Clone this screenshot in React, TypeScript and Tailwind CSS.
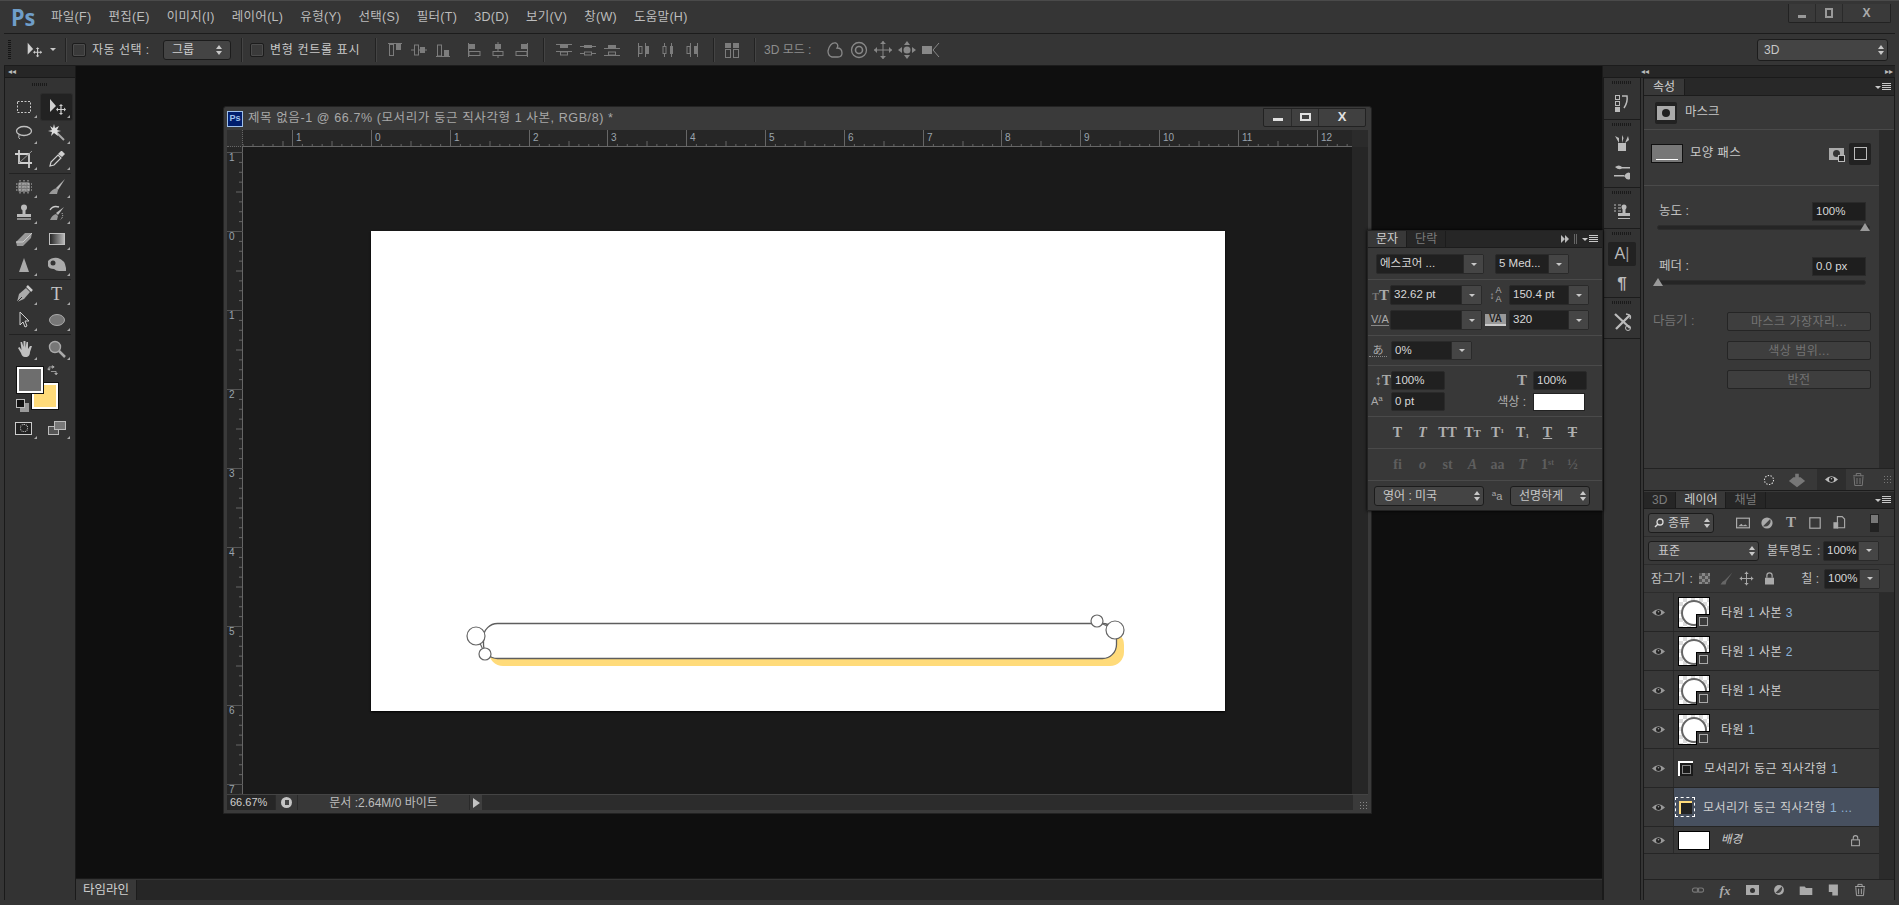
import type { ReactNode } from "react";

const rulerX = [
  [292, "1"], [371, "0"], [450, "1"], [529, "2"], [607, "3"], [686, "4"], [765, "5"],
  [844, "6"], [923, "7"], [1001, "8"], [1080, "9"], [1159, "10"], [1238, "11"], [1317, "12"],
] as const;
const rulerY = [
  [152, "1"], [231, "0"], [310, "1"], [389, "2"], [468, "3"], [547, "4"], [626, "5"], [705, "6"], [784, "7"],
] as const;

const menus = ["파일(F)", "편집(E)", "이미지(I)", "레이어(L)", "유형(Y)", "선택(S)", "필터(T)", "3D(D)", "보기(V)", "창(W)", "도움말(H)"];

function Ico({ size = 20, children, className = "" }: { size?: number; children: ReactNode; className?: string }) {
  return (
    <svg width={size} height={size} viewBox="0 0 20 20" className={"shrink-0 " + className}>
      {children}
    </svg>
  );
}

function Grip({ n = 11 }: { n?: number }) {
  return <div className="h-[3px] bg-[repeating-linear-gradient(90deg,#1a1a1a_0_1px,transparent_1px_2px)]" style={{ width: n * 2 }} />;
}

function Caret({ className = "border-t-[#c8c8c8]" }: { className?: string }) {
  return <div className={"w-0 h-0 border-x-[3px] border-x-transparent border-t-[3px] " + className} />;
}

function UpDown() {
  return (
    <div className="flex flex-col gap-[2px] items-center">
      <div className="w-0 h-0 border-x-[3px] border-x-transparent border-b-[4px] border-b-[#c8c8c8]" />
      <div className="w-0 h-0 border-x-[3px] border-x-transparent border-t-[4px] border-t-[#c8c8c8]" />
    </div>
  );
}

function MoveIcon({ size = 20 }: { size?: number }) {
  return (
    <Ico size={size}>
      <path d="M3 2v13l6-6z" fill="#d0d0d0" />
      <path d="M14 8v9M10 12.500h8" stroke="#d0d0d0" strokeWidth="1.200" />
      <path d="M14 7l-2 2h4zM14 18l-2-2h4zM9 12.500l2-2v4zM19 12.500l-2-2v4z" fill="#d0d0d0" />
    </Ico>
  );
}

function Tool({ children, active }: { children: ReactNode; active?: boolean }) {
  return (
    <div className={"w-[31px] h-[26px] flex items-center justify-center relative " + (active ? "bg-[#222] rounded-[2px] shadow-[0_0_0_1px_#2c2c2c]" : "")}>
      {children}
      <div className="absolute right-[2px] bottom-[2px] w-0 h-0 border-l-[3px] border-l-transparent border-b-[3px] border-b-[#a8a8a8]" />
    </div>
  );
}

function ToolRow({ children }: { children: ReactNode }) {
  return <div className="flex gap-[2px] justify-center">{children}</div>;
}

function ToolSep({ className = "" }: { className?: string }) {
  return <div className={"h-px bg-[#222] mx-[4px] " + className} />;
}

function ToolPanel() {
  return (
    <div className="w-[72px] h-full bg-[#333] border-x border-[#1a1a1a] flex flex-col">
      <div className="h-[12px] bg-[#262626] border-b border-[#1a1a1a] flex items-center pl-[3px] text-[#bbb] text-[8px] leading-none">◂◂</div>
      <div className="flex justify-center pt-[5px] pb-[8px]"><Grip n={8} /></div>
      <div className="flex flex-col">
        <ToolRow>
          <Tool><Ico><rect x="3.500" y="4.500" width="13" height="11" fill="none" stroke="#c8c8c8" strokeDasharray="2 1.500" /></Ico></Tool>
          <Tool active><MoveIcon /></Tool>
        </ToolRow>
        <ToolRow>
          <Tool><Ico><ellipse cx="10" cy="8" rx="7.500" ry="4.500" fill="none" stroke="#c0c0c0" strokeWidth="1.300" /><path d="M5 12q-1 3 1 4" fill="none" stroke="#c0c0c0" /></Ico></Tool>
          <Tool><Ico><path d="M8 8l9 9" stroke="#aaa" strokeWidth="2" /><path d="M7 1l1 4 4-2-2 4 4 1-4 1 1 4-4-3-3 3 1-4-4-1 4-1-2-4 3 2z" fill="#ddd" /></Ico></Tool>
        </ToolRow>
        <ToolRow>
          <Tool><Ico><path d="M5 1v13h13M1 5h14v14" fill="none" stroke="#d0d0d0" strokeWidth="1.800" /><path d="M5 14L18 2" stroke="#999" /></Ico></Tool>
          <Tool><Ico><path d="M3 17l1-4 7-7 3 3-7 7z" fill="none" stroke="#d0d0d0" strokeWidth="1.200" /><path d="M11 5l3-3 1 0 3 3-3 3z" fill="#d0d0d0" /></Ico></Tool>
        </ToolRow>
        <ToolSep className="mt-[1px]" />
        <ToolRow>
          <Tool><Ico><rect x="4" y="5" width="12" height="10" rx="2" fill="#777" /><path d="M2 7h16M2 10h16M2 13h16M6 3v14M10 3v14M14 3v14" stroke="#bbb" strokeDasharray="1.500 1.500" /></Ico></Tool>
          <Tool><Ico><path d="M18 2L9 11l2 2z" fill="#b8b8b8" /><path d="M10 11q-5 1-8 6h8l1-4z" fill="#999" /></Ico></Tool>
        </ToolRow>
        <ToolRow>
          <Tool><Ico><circle cx="10" cy="4.500" r="3" fill="#bbb" /><path d="M8.500 7h3v4h-3z" fill="#bbb" /><rect x="3" y="11" width="14" height="3" fill="#bbb" /><path d="M3 16h14" stroke="#bbb" strokeWidth="1.300" /></Ico></Tool>
          <Tool><Ico><path d="M17 4L9 10l2 2z" fill="#bbb" /><path d="M9 11q-4 1-6 6h7l1-4z" fill="#999" /><path d="M3 7q3-5 9-3" fill="none" stroke="#ccc" strokeWidth="1.400" /><path d="M15 10q2 4-2 7" fill="none" stroke="#ccc" strokeDasharray="1 1" /></Ico></Tool>
        </ToolRow>
        <ToolRow>
          <Tool><Ico><path d="M2 13L11 4h7l-1 5-8 8H3z" fill="#999" /><path d="M2 13h7l9-9" fill="none" stroke="#ccc" /></Ico></Tool>
          <Tool><Ico><defs><linearGradient id="grad"><stop offset="0" stopColor="#222" /><stop offset="1" stopColor="#bbb" /></linearGradient></defs><rect x="2.500" y="4.500" width="15" height="11" fill="url(#grad)" stroke="#c0c0c0" /></Ico></Tool>
        </ToolRow>
        <ToolRow>
          <Tool><Ico><path d="M10 3l5 14H5z" fill="#aaa" /></Ico></Tool>
          <Tool><Ico><path d="M1 6q4-4 10-3 7 2 8 10v3h-7q-3 0-5-2-5 0-6-3z" fill="#aaa" /><circle cx="6" cy="8" r="2.500" fill="#333" /></Ico></Tool>
        </ToolRow>
        <ToolSep className="my-[1px]" />
        <ToolRow>
          <Tool><Ico><path d="M3 18l2-8 7-6 4 4-6 7z" fill="#aaa" /><path d="M13 2l5 5" stroke="#ccc" strokeWidth="2.500" /><path d="M3 18l5-5" stroke="#333" /></Ico></Tool>
          <Tool><div className="text-[#c4c4c4] text-[18px] leading-none font-['Liberation_Serif',serif]">T</div></Tool>
        </ToolRow>
        <ToolRow>
          <Tool><Ico><path d="M6 2v13l3-3 2 5 2-1-2-5h4z" fill="#333" stroke="#d0d0d0" /></Ico></Tool>
          <Tool><Ico><ellipse cx="10" cy="10" rx="7.500" ry="5.500" fill="#777" stroke="#aaa" /></Ico></Tool>
        </ToolRow>
        <ToolSep className="mt-[1px] mb-[1px]" />
        <ToolRow>
          <Tool><Ico><path d="M4 9l3 5q1 4 4 4h2q3-1 3-5l2-6-2 0-2 3 0-7h-1.500l-1 6V2h-2l0 6L8 3H6.500l1 8-2-3z" fill="#c0c0c0" /></Ico></Tool>
          <Tool><Ico><circle cx="8" cy="8" r="5.500" fill="#777" stroke="#aaa" strokeWidth="1.400" /><path d="M12 12l6 6" stroke="#aaa" strokeWidth="2.500" /></Ico></Tool>
        </ToolRow>
      </div>
      <div className="relative h-[50px] mt-[3px] shrink-0">
        <div className="absolute left-[12px] top-[2px] w-[26px] h-[26px] bg-[#6e6e6e] border-2 border-white shadow-[0_0_0_1px_#111] z-10" />
        <div className="absolute left-[27px] top-[18px] w-[26px] h-[26px] bg-[#ffdb7a] border-2 border-white shadow-[0_0_0_1px_#111]" />
        <div className="absolute left-[42px] top-0">
          <Ico size={13}><path d="M3 8V3h8M11 3l-3-2v4zM3 8L1 6h4zM6 10h8v5M14 15l-2-2h4z" fill="none" stroke="#ccc" /></Ico>
        </div>
        <div className="absolute left-[11px] top-[34px] w-[9px] h-[9px] bg-[#111] border border-[#bbb] z-10" />
        <div className="absolute left-[15px] top-[38px] w-[9px] h-[9px] bg-[#999]" />
      </div>
      <ToolRow>
        <Tool><div className="w-[17px] h-[13px] bg-[#222] border border-[#ccc] flex items-center justify-center"><div className="w-[8px] h-[8px] rounded-full border border-dotted border-[#ddd]" /></div></Tool>
        <Tool><div className="relative w-[18px] h-[14px]"><div className="absolute left-0 bottom-0 w-[11px] h-[9px] bg-[#555] border border-[#bbb]" /><div className="absolute right-0 top-0 w-[12px] h-[9px] bg-[#777] border border-[#bbb]" /></div></Tool>
      </ToolRow>
    </div>
  );
}

function OptSep({ className = "" }: { className?: string }) {
  return <div className={"w-[2px] h-[24px] bg-[#222] border-r border-[#444] shrink-0 " + className} />;
}

function Check() {
  return <div className="w-[14px] h-[14px] rounded-[2px] bg-[#3a3a3a] border border-[#1c1c1c] shadow-[inset_0_0_0_1px_#4c4c4c] shrink-0" />;
}

const alignColor = "#7c7c7c";

function AlignIcon({ v }: { v: "top" | "mid" | "bot" | "left" | "center" | "right" }) {
  const c = alignColor;
  const shapes: Record<string, ReactNode> = {
    top: <><path d="M3 3.500h14" stroke={c} /><rect x="4.500" y="4.500" width="4" height="11" fill="none" stroke={c} /><rect x="11" y="4" width="5" height="6" fill={c} /></>,
    mid: <><path d="M2 10h16" stroke={c} /><rect x="5.500" y="5" width="4" height="10" fill="#353535" stroke={c} /><rect x="11" y="7" width="5" height="6" fill={c} /></>,
    bot: <><path d="M3 16.500h14" stroke={c} /><rect x="4.500" y="5" width="4" height="11" fill="none" stroke={c} /><rect x="11" y="10" width="5" height="6" fill={c} /></>,
    left: <><path d="M4.500 3v14" stroke={c} /><rect x="5" y="4" width="6" height="5" fill={c} /><rect x="5" y="11.500" width="11" height="4" fill="none" stroke={c} /></>,
    center: <><path d="M10 2v16" stroke={c} /><rect x="7" y="4" width="6" height="5" fill={c} /><rect x="5" y="11.500" width="10" height="4" fill="#353535" stroke={c} /></>,
    right: <><path d="M15.500 3v14" stroke={c} /><rect x="9" y="4" width="6" height="5" fill={c} /><rect x="4" y="11.500" width="11" height="4" fill="none" stroke={c} /></>,
  };
  return <Ico size={20}>{shapes[v]}</Ico>;
}

function DistIcon({ kind }: { kind: "t" | "m" | "b" | "l" | "c" | "r" }) {
  const c = alignColor;
  const shapes: Record<string, ReactNode> = {
    t: <><path d="M2 4.500h16M2 11.500h16" stroke={c} /><rect x="6" y="5" width="8" height="3" fill={c} /><rect x="6.500" y="12" width="7" height="3" fill="none" stroke={c} /></>,
    m: <><path d="M2 6.500h16M2 13.500h16" stroke={c} /><rect x="6" y="5" width="8" height="3" fill={c} /><rect x="6.500" y="12" width="7" height="3" fill="#353535" stroke={c} /></>,
    b: <><path d="M2 8.500h16M2 15.500h16" stroke={c} /><rect x="6" y="5" width="8" height="3" fill={c} /><rect x="6.500" y="12" width="7" height="3" fill="none" stroke={c} /></>,
    l: <><path d="M4.500 3v14M11.500 3v14" stroke={c} /><rect x="5" y="6.500" width="3" height="7" fill="none" stroke={c} /><rect x="12" y="6" width="3" height="8" fill={c} /></>,
    c: <><path d="M6.500 3v14M13.500 3v14" stroke={c} /><rect x="5" y="6.500" width="3" height="7" fill="#353535" stroke={c} /><rect x="12" y="6" width="3" height="8" fill={c} /></>,
    r: <><path d="M8.500 3v14M15.500 3v14" stroke={c} /><rect x="5" y="6.500" width="3" height="7" fill="none" stroke={c} /><rect x="12" y="6" width="3" height="8" fill={c} /></>,
  };
  return <Ico size={20}>{shapes[kind]}</Ico>;
}

function OptionsBar() {
  return (
    <div className="h-[33px] bg-[#353535] border-y border-[#1c1c1c] flex items-center relative shrink-0 mx-[4px]">
      <div className="w-[3px] h-[19px] ml-[4px] bg-[repeating-linear-gradient(180deg,#151515_0_1px,transparent_1px_2px)]" />
      <div className="ml-[14px]"><MoveIcon size={18} /></div>
      <div className="ml-[7px]"><Caret /></div>
      <OptSep className="ml-[9px]" />
      <div className="ml-[5px]"><Check /></div>
      <span className="ml-[6px] w-[59px] text-[#c8c8c8] text-[12px] whitespace-nowrap tracking-[0.5px]">자동 선택 :</span>
      <div className="ml-[12px] w-[68px] h-[20px] rounded-[3px] bg-[#444] border border-[#1c1c1c] flex items-center justify-between px-[8px] text-[#d0d0d0] text-[12px]">
        그룹<UpDown />
      </div>
      <OptSep className="ml-[10px]" />
      <div className="ml-[7px]"><Check /></div>
      <span className="ml-[6px] w-[91px] text-[#c8c8c8] text-[12px] whitespace-nowrap tracking-[0.7px]">변형 컨트롤 표시</span>
      <OptSep className="ml-[14px]" />
      <div className="flex gap-[4px] ml-[8px]">
        <AlignIcon v="top" /><AlignIcon v="mid" /><AlignIcon v="bot" />
        <div className="w-[3px]" />
        <AlignIcon v="left" /><AlignIcon v="center" /><AlignIcon v="right" />
      </div>
      <OptSep className="ml-[11px]" />
      <div className="flex gap-[4px] ml-[9px]">
        <DistIcon kind="t" /><DistIcon kind="m" /><DistIcon kind="b" />
        <div className="w-[4px]" />
        <DistIcon kind="l" /><DistIcon kind="c" /><DistIcon kind="r" />
      </div>
      <OptSep className="ml-[11px]" />
      <div className="ml-[7px]">
        <Ico size={20}><rect x="3" y="3" width="6" height="5" fill={alignColor} /><rect x="3.500" y="9.500" width="5" height="8" fill="none" stroke={alignColor} /><rect x="11" y="3" width="6" height="5" fill={alignColor} /><rect x="11.500" y="9.500" width="5" height="8" fill="none" stroke={alignColor} /></Ico>
      </div>
      <OptSep className="ml-[12px]" />
      <span className="ml-[8px] w-[45px] text-[#8d8d8d] text-[12px] whitespace-nowrap">3D 모드 :</span>
      <div className="flex gap-[4px] ml-[16px] items-center">
        <Ico size={20}><path d="M3 11q2-9 8-8 3 2 1 5 5 0 5 5 0 4-4 4H7q-4-1-4-6z" fill="none" stroke="#888" strokeWidth="1.300" /></Ico>
        <Ico size={20}><circle cx="10" cy="10" r="7.500" fill="none" stroke="#888" strokeWidth="1.300" /><circle cx="10" cy="10" r="3.500" fill="none" stroke="#888" strokeWidth="1.600" /></Ico>
        <Ico size={20}><path d="M10 1v18M1 10h18" stroke="#888" /><path d="M10 1l-3 3h6zM10 19l-3-3h6zM1 10l3-3v6zM19 10l-3-3v6z" fill="#888" /></Ico>
        <Ico size={20}><path d="M10 1l-3 4h6zM10 19l-3-4h6zM1 10l4-3v6zM19 10l-4-3v6z" fill="#888" /><circle cx="10" cy="10" r="3.500" fill="#888" /></Ico>
        <Ico size={20}><rect x="1" y="6" width="10" height="8" fill="#888" /><path d="M18 3l-6 7 6 7" fill="none" stroke="#888" /></Ico>
      </div>
      <div className="ml-auto mr-[7px] w-[131px] h-[22px] rounded-[3px] bg-[#444] border border-[#1c1c1c] flex items-center justify-between pl-[6px] pr-[3px] text-[#c8c8c8] text-[12px]">
        3D<UpDown />
      </div>
    </div>
  );
}

function MenuBar() {
  return (
    <div className="h-[33px] bg-[#353535] flex items-center relative shrink-0 pl-[11px] border-t border-[#4a4a4a]">
      <span className="text-[#6f9ec9] text-[24px] font-bold leading-none w-[40px] scale-x-[0.9] origin-left font-['Open_Sans',sans-serif]">Ps</span>
      <div className="flex gap-[17px] text-[#bdbdbd] text-[12.500px] tracking-[0.3px]">
        {menus.map((m) => <span key={m} className="whitespace-nowrap">{m}</span>)}
      </div>
      <div className="ml-auto mr-[8px] -mt-[8px] flex h-[19px] w-[103px] bg-[#3a3a3a] border border-t-0 border-[#222] rounded-b-[2px] items-stretch">
        <div className="w-[27px] flex items-end justify-center pb-[4px] border-r border-[#2a2a2a]"><div className="w-[8px] h-[3px] bg-[#999]" /></div>
        <div className="w-[27px] flex items-center justify-center border-r border-[#2a2a2a]"><div className="w-[8px] h-[10px] border-2 border-[#999]" /></div>
        <div className="flex-1 flex items-center justify-center text-[#aaa] text-[12px] font-bold">X</div>
      </div>
    </div>
  );
}

function HRuler() {
  return (
    <svg width="1109" height="17" viewBox="243 130 1109 17" className="block">
      {rulerX.map(([x, t]) => (
        <g key={x}>
          <path d={`M${x + 0.5} 130v17`} stroke="#666" />
          <text x={x + 4} y={141} fontSize="10" fill="#9aa4ad" fontFamily="Liberation Sans">{t}</text>
          {[1, 2, 3, 4, 5, 6, 7].map((i) => (
            <path key={i} d={`M${x + 0.5 + (i * 79) / 8} ${i === 4 ? 141 : 144}V147`} stroke="#666" />
          ))}
        </g>
      ))}
      <path d="M243 146.500h1109" stroke="#666" />
      <path d="M243 144v3M253 144v3M263 144v3M273 144v3M283 141v6" stroke="#666" />
    </svg>
  );
}

function VRuler() {
  return (
    <svg width="16" height="647" viewBox="227 147 16 647" className="block shrink-0">
      <path d="M242.500 147v647" stroke="#666" />
      {rulerY.map(([y, t]) => (
        <g key={y}>
          <path d={`M227 ${y + 0.5}h16`} stroke="#555" />
          <text x={229} y={y + 9} fontSize="10" fill="#9aa4ad" fontFamily="Liberation Sans">{t}</text>
          {[1, 2, 3, 4, 5, 6, 7].map((i) => (
            <path key={i} d={`M${i === 4 ? 236 : 239} ${y + 0.5 + (i * 79) / 8}H243`} stroke="#666" />
          ))}
        </g>
      ))}
    </svg>
  );
}

function CanvasArt() {
  return (
    <svg width="854" height="480" viewBox="371 232 854 480" className="block">
      <rect x="489" y="632" width="635" height="35" rx="14" fill="#ffdb7a" />
      <rect x="483.500" y="624.500" width="633" height="35" rx="14" fill="#fff" stroke="#5e5e5e" strokeWidth="1.300" />
      <path d="M478 640l7 15M1097 622l18 9" stroke="#666" strokeWidth="1.200" />
      <ellipse cx="476" cy="637" rx="9" ry="9" fill="#fff" stroke="#666" strokeWidth="1.200" />
      <ellipse cx="485" cy="655" rx="6" ry="6" fill="#fff" stroke="#666" strokeWidth="1.200" />
      <ellipse cx="1097" cy="622" rx="6" ry="6" fill="#fff" stroke="#666" strokeWidth="1.200" />
      <ellipse cx="1115" cy="631" rx="9" ry="9" fill="#fff" stroke="#666" strokeWidth="1.200" />
    </svg>
  );
}

function DocWindow() {
  return (
    <div className="absolute left-[147px] top-[40px] w-[1149px] h-[708px] bg-[#3a3a3a] border border-[#222] rounded-t-[3px] flex flex-col px-[3px] pb-[3px]">
      <div className="h-[23px] flex items-center shrink-0 relative">
        <div className="w-[16px] h-[16px] bg-[#001e6e] border border-[#9fc0ea] text-[#9fc0ea] text-[9px] font-bold flex items-center justify-center">Ps</div>
        <span className="ml-[5px] text-[#a8a8a8] text-[12.500px] whitespace-nowrap tracking-[0.6px]">제목 없음-1 @ 66.7% (모서리가 둥근 직사각형 1 사본, RGB/8) *</span>
        <div className="ml-auto mr-[2px] -mt-[3px] w-[103px] h-[19px] flex bg-[#404040] border border-[#222] rounded-b-[2px] items-stretch">
          <div className="w-[28px] flex items-end justify-center pb-[5px] border-r border-[#2a2a2a]"><div className="w-[10px] h-[3px] bg-[#e0e0e0]" /></div>
          <div className="w-[27px] flex items-center justify-center border-r border-[#2a2a2a]"><div className="w-[11px] h-[8px] border-2 border-[#e0e0e0]" /></div>
          <div className="flex-1 flex items-center justify-center text-[#e0e0e0] text-[13px] font-bold">X</div>
        </div>
      </div>
      <div className="flex-1 flex flex-col bg-[#1a1a1a] min-h-0">
        <div className="flex h-[17px] bg-[#262626] shrink-0">
          <div className="w-[16px] h-[17px] bg-[#2e2e2e] border-r border-b border-[#666] border-dotted" />
          <HRuler />
          <div className="flex-1 bg-[#2b2b2b]" />
        </div>
        <div className="flex flex-1 min-h-0">
          <div className="bg-[#262626]"><VRuler /></div>
          <div className="w-[1109px] bg-[#1a1a1a] relative overflow-hidden">
            <div className="absolute left-[128px] top-[84px] w-[854px] h-[480px] bg-white shadow-[0_1px_2px_#000]"><CanvasArt /></div>
          </div>
          <div className="flex-1 bg-[#262626]" />
        </div>
        <div className="h-[16px] flex bg-[#2c2c2c] border-t border-[#444] shrink-0 items-center relative">
          <div className="w-[48px] bg-[#262626] h-full text-[#d0d0d0] text-[11px] pl-[3px] flex items-center">66.67%</div>
          <div className="w-[23px] h-full bg-[#383838] border-x border-[#2a2a2a] flex items-center justify-center">
            <div className="w-[11px] h-[11px] rounded-full bg-[#c4c4c4] flex items-center justify-center"><div className="w-[4px] h-[5px] bg-[#444]" /></div>
          </div>
          <div className="w-[171px] h-full bg-[#383838] text-[#bdbdbd] text-[12px] flex items-center justify-center whitespace-nowrap">문서 :2.64M/0 바이트</div>
          <div className="w-[13px] h-full bg-[#3e3e3e] border-l border-[#2a2a2a] flex items-center justify-center">
            <div className="w-0 h-0 border-y-[5px] border-y-transparent border-l-[7px] border-l-[#c4c4c4]" />
          </div>
          <div className="flex-1 h-full bg-[#2c2c2c]" />
          <div className="w-[15px] h-full bg-[#3a3a3a] flex items-end justify-end"><div className="w-[9px] h-[9px] bg-[radial-gradient(#888_1px,transparent_1px)] bg-[length:3px_3px]" /></div>
        </div>
      </div>
    </div>
  );
}

function Field({ value, w, caret, h = 20 }: { value: string; w: number; caret?: boolean; h?: number }) {
  return (
    <div className="flex border border-[#2a2a2a] rounded-[2px] items-stretch bg-[#202020]" style={{ width: w, height: h }}>
      <div className="flex-1 text-[#d8d8d8] text-[11.500px] pl-[3px] flex items-center whitespace-nowrap overflow-hidden">{value}</div>
      {caret && <div className="w-[20px] bg-[#454545] border-l border-[#2a2a2a] flex items-center justify-center"><Caret /></div>}
    </div>
  );
}

function Tab({ children, active }: { children: ReactNode; active?: boolean }) {
  return (
    <div className={"h-full px-[8px] flex items-center text-[12px] border-r border-[#1c1c1c] whitespace-nowrap " + (active ? "bg-[#383838] text-[#d0d0d0]" : "bg-[#262626] text-[#7c7c7c]")}>
      {children}
    </div>
  );
}

function MenuGlyph() {
  return (
    <div className="flex items-center gap-[1px]">
      <Caret />
      <div className="w-[9px] h-[8px] bg-[repeating-linear-gradient(180deg,#c8c8c8_0_1px,transparent_1px_2px)]" />
    </div>
  );
}

function PanelDiv() {
  return <div className="h-px bg-[#4a4a4a] my-[5px] shrink-0" />;
}

function Styled({ children, dim }: { children: ReactNode; dim?: boolean }) {
  return <div className={"w-[25px] text-center font-bold leading-none whitespace-nowrap text-[14px] font-['Liberation_Serif',serif] " + (dim ? "text-[#5e5e5e]" : "text-[#b0b0b0]")}>{children}</div>;
}

function CharacterPanel() {
  return (
    <div className="absolute left-[1291px] top-[164px] w-[236px] h-[281px] bg-[#383838] border border-[#222] flex flex-col shadow-[0_0_3px_#000]">
      <div className="h-[17px] bg-[#262626] flex items-stretch shrink-0 border-b border-[#1c1c1c]">
        <Tab active>문자</Tab>
        <Tab>단락</Tab>
        <div className="ml-auto flex items-center gap-[5px] pr-[4px]">
          <div className="flex"><div className="w-0 h-0 border-y-[4px] border-y-transparent border-l-[4px] border-l-[#bbb]" /><div className="w-0 h-0 border-y-[4px] border-y-transparent border-l-[4px] border-l-[#bbb]" /></div>
          <div className="w-[3px] h-[10px] border-x border-[#666]" />
          <MenuGlyph />
        </div>
      </div>
      <div className="flex gap-[11px] px-[8px] pt-[6px]">
        <Field value="에스코어 ..." w={108} caret />
        <Field value="5 Med..." w={74} caret />
      </div>
      <PanelDiv />
      <div className="grid grid-cols-[21px_92px_27px_80px] gap-y-[5px] px-[1px] items-center">
        <div className="text-[#aaa] font-bold font-['Liberation_Serif',serif] text-right pr-[1px] leading-none whitespace-nowrap"><span className="text-[10px] text-[#777]">T</span><span className="text-[15px]">T</span></div>
        <Field value="32.62 pt" w={92} caret />
        <div className="text-[#aaa] text-[9px] leading-[9px] text-center flex items-center justify-center gap-[1px]"><span className="text-[10px]">↕</span><span>A<br />A</span></div>
        <Field value="150.4 pt" w={80} caret />
        <div className="text-[#aaa] text-[11px] leading-none text-right pr-[1px] whitespace-nowrap border-b border-[#888] ml-[2px] mr-[1px]">V/A</div>
        <Field value="" w={92} caret />
        <div className="text-[#222] bg-[#999] text-[10px] font-bold leading-none text-center mx-[3px] border-b-2 border-[#ccc]">VA</div>
        <Field value="320" w={80} caret />
      </div>
      <PanelDiv />
      <div className="flex items-center px-[1px] gap-[4px]">
        <div className="w-[18px] text-[#aaa] text-[11px] text-center leading-none border-b border-dotted border-[#888]">あ</div>
        <Field value="0%" w={81} caret h={19} />
      </div>
      <PanelDiv />
      <div className="grid grid-cols-[22px_54px_66px_22px_54px] gap-y-[2px] px-[1px] items-center">
        <div className="text-[#aaa] text-[14px] font-bold font-['Liberation_Serif',serif] leading-none text-right whitespace-nowrap">↕T</div>
        <Field value="100%" w={54} h={19} />
        <div />
        <div className="text-[#aaa] text-[15px] font-bold font-['Liberation_Serif',serif] leading-none text-center">T</div>
        <Field value="100%" w={54} h={19} />
        <div className="text-[#aaa] text-[11px] leading-none pl-[2px] whitespace-nowrap">A<sup className="text-[8px]">a</sup></div>
        <Field value="0 pt" w={54} h={19} />
        <div className="col-span-2 text-[#b0b0b0] text-[12px] text-right pr-[7px]">색상 :</div>
        <div className="w-[52px] h-[18px] bg-white border border-[#222]" />
      </div>
      <PanelDiv />
      <div className="flex justify-center items-center h-[21px] px-[2px]">
        <Styled>T</Styled><Styled><i>T</i></Styled><Styled>TT</Styled><Styled>T<span className="text-[11px]">T</span></Styled>
        <Styled>T<sup className="text-[7px]">1</sup></Styled><Styled>T<sub className="text-[7px]">1</sub></Styled><Styled><u>T</u></Styled><Styled><s>T</s></Styled>
      </div>
      <PanelDiv />
      <div className="flex justify-center items-center h-[21px] px-[2px]">
        <Styled dim>fi</Styled><Styled dim><i>o</i></Styled><Styled dim>st</Styled><Styled dim><i>A</i></Styled>
        <Styled dim>aa</Styled><Styled dim><i>T</i></Styled><Styled dim>1<sup className="text-[8px]">st</sup></Styled><Styled dim>½</Styled>
      </div>
      <PanelDiv />
      <div className="flex items-center px-[6px]">
        <div className="w-[110px] h-[20px] rounded-[3px] bg-[#444] border border-[#1c1c1c] flex items-center justify-between pl-[8px] pr-[3px] text-[#c8c8c8] text-[12px] whitespace-nowrap">영어 : 미국<UpDown /></div>
        <div className="w-[26px] text-center text-[#aaa] text-[11px] whitespace-nowrap"><sup className="text-[8px]">a</sup>a</div>
        <div className="w-[80px] h-[20px] rounded-[3px] bg-[#444] border border-[#1c1c1c] flex items-center justify-between pl-[8px] pr-[3px] text-[#c8c8c8] text-[12px] whitespace-nowrap">선명하게<UpDown /></div>
      </div>
    </div>
  );
}

function DockGroup({ children, h }: { children: ReactNode; h: number }) {
  return (
    <div className="border-b border-[#1c1c1c] bg-[#333] flex flex-col items-center shrink-0" style={{ height: h }}>
      <div className="pt-[3px] pb-[2px]"><Grip n={10} /></div>
      <div className="flex-1 flex flex-col items-center justify-around w-full">{children}</div>
    </div>
  );
}

function Dock() {
  return (
    <div className="w-[38px] bg-[#333] border-x border-[#1a1a1a] flex flex-col h-full">
      <DockGroup h={42}>
        <Ico size={20}><rect x="3.500" y="2.500" width="4" height="4" fill="none" stroke="#bbb" /><rect x="3.500" y="8.500" width="4" height="4" fill="none" stroke="#bbb" /><rect x="3" y="14" width="5" height="5" fill="#bbb" /><path d="M10 3h5q1 6-3 12" fill="none" stroke="#bbb" strokeWidth="1.500" /></Ico>
      </DockGroup>
      <DockGroup h={68}>
        <Ico size={20}><rect x="6" y="10" width="8" height="8" fill="#bbb" /><path d="M7 10L3 3l4 2zM10 10V2l1.500 3zM13 10l3-7 1 4z" fill="#bbb" /></Ico>
        <Ico size={20}><path d="M3 5q4-3 7 0h8v1.500h-8q-3 2-7-1.500zM2 13h10v1.500H2zM12 14q3-5 6-3v6q-3 2-6-3z" fill="#bbb" /></Ico>
      </DockGroup>
      <DockGroup h={41}>
        <Ico size={20}><path d="M2 3h2M2 6h2M2 9h2M6 3h3M6 6h3M6 9h3" stroke="#bbb" /><circle cx="12" cy="5" r="2.500" fill="#bbb" /><rect x="10.500" y="6" width="3" height="5" fill="#bbb" /><rect x="6" y="11" width="12" height="3" fill="#bbb" /><path d="M6 16.500h12" stroke="#bbb" /></Ico>
      </DockGroup>
      <DockGroup h={69}>
        <div className="w-[28px] h-[24px] bg-[#222] rounded-[2px] text-[#bbb] text-[16px] flex items-center justify-center leading-none font-['Liberation_Sans',sans-serif]">A<span className="font-normal text-[#999]">|</span></div>
        <div className="text-[#bbb] text-[17px] font-bold leading-none">¶</div>
      </DockGroup>
      <DockGroup h={41}>
        <Ico size={20}><path d="M3 2l15 14M18 3L4 17" stroke="#bbb" strokeWidth="2.300" /><circle cx="16" cy="16" r="2.500" fill="none" stroke="#bbb" /><path d="M14 2q6 1 4 5" fill="none" stroke="#bbb" strokeWidth="1.500" /></Ico>
      </DockGroup>
      <div className="flex-1" />
    </div>
  );
}

function PropsButton({ children }: { children: ReactNode }) {
  return <div className="w-[144px] h-[19px] rounded-[2px] bg-[#3e3e3e] border border-[#252525] text-[#747474] text-[12px] flex items-center justify-center whitespace-nowrap tracking-[0.5px]">{children}</div>;
}

function Slider({ pos }: { pos: "left" | "right" }) {
  return (
    <div className={"relative h-[5px] rounded-full bg-[#252525] border border-[#2c2c2c] ml-[13px] " + (pos === "left" ? "w-[209px]" : "w-[213px]")}>
      <div className={"absolute -top-[3px] w-0 h-0 border-x-[5px] border-x-transparent border-b-[8px] border-b-[#9a9a9a] " + (pos === "left" ? "-left-[5px]" : "-right-[1px]")} />
    </div>
  );
}

function PropertiesPanel() {
  return (
    <div className="h-[412px] bg-[#383838] flex flex-col shrink-0">
      <div className="h-[18px] bg-[#282828] flex items-stretch border-b border-[#1c1c1c] shrink-0 justify-between pt-[1px]">
        <Tab active><span className="px-[1px]">속성</span></Tab>
        <div className="flex items-center pr-[3px]"><MenuGlyph /></div>
      </div>
      <div className="h-[34px] flex items-center pl-[11px] border-b border-[#4a4a4a] shrink-0">
        <div className="w-[22px] h-[22px] bg-[#222] rounded-[2px] flex items-center justify-center">
          <div className="w-[18px] h-[14px] bg-[#aaa] flex items-center justify-center"><div className="w-[8px] h-[8px] rounded-full bg-[#222]" /></div>
        </div>
        <span className="ml-[8px] text-[#c8c8c8] text-[12.500px]">마스크</span>
      </div>
      <div className="flex flex-1 min-h-0">
        <div className="flex-1 flex flex-col min-w-0">
          <div className="h-[56px] flex items-center pl-[7px] border-b border-[#4a4a4a] shrink-0 pb-[8px]">
            <div className="w-[32px] h-[19px] bg-[#777] border border-[#111] flex items-end justify-center pb-[2px]"><div className="w-[22px] h-px bg-white" /></div>
            <span className="ml-[7px] text-[#c8c8c8] text-[12.500px] whitespace-nowrap tracking-[0.3px]">모양 패스</span>
            <div className="ml-auto mr-[8px] flex items-center gap-[5px]">
              <div className="relative w-[15px] h-[12px] bg-[#aaa] flex items-center justify-center"><div className="w-[7px] h-[7px] rounded-full bg-[#333]" /><div className="absolute -right-[1px] -bottom-[2px] w-[7px] h-[7px] bg-[#222] border border-[#bbb]" /></div>
              <div className="w-[22px] h-[22px] bg-[#222] rounded-[2px] flex items-center justify-center"><div className="w-[13px] h-[13px] border border-[#bbb]" /></div>
            </div>
          </div>
          <div className="flex items-center justify-between pl-[15px] pr-[13px] pt-[16px] text-[#c0c0c0] text-[12.500px]">
            <span>농도 :</span>
            <div className="w-[54px] h-[19px] bg-[#1e1e1e] border border-[#2a2a2a] text-[#d8d8d8] text-[11.500px] pl-[3px] flex items-center">100%</div>
          </div>
          <div className="mt-[4px]"><Slider pos="right" /></div>
          <div className="flex items-center justify-between pl-[15px] pr-[13px] pt-[27px] text-[#c0c0c0] text-[12.500px]">
            <span>페더 :</span>
            <div className="w-[54px] h-[19px] bg-[#1e1e1e] border border-[#2a2a2a] text-[#d8d8d8] text-[11.500px] pl-[3px] flex items-center">0.0 px</div>
          </div>
          <div className="mt-[4px]"><Slider pos="left" /></div>
          <div className="flex pl-[9px] pr-[8px] pt-[27px] justify-between">
            <span className="text-[#747474] text-[12.500px]">다듬기 :</span>
            <div className="flex flex-col gap-[10px]">
              <PropsButton>마스크 가장자리...</PropsButton>
              <PropsButton>색상 범위...</PropsButton>
              <PropsButton>반전</PropsButton>
            </div>
          </div>
        </div>
        <div className="w-[15px] bg-[#2b2b2b] shrink-0" />
      </div>
      <div className="h-[22px] border-t border-[#222] flex items-center shrink-0 justify-end pr-[2px] bg-[#383838] relative">
        <Ico size={14} className="mr-[12px]"><circle cx="10" cy="10" r="6.500" fill="none" stroke="#ddd" strokeWidth="1.500" strokeDasharray="2 2" /></Ico>
        <Ico size={18} className="mr-[11px]"><path d="M1 11l5-4h2V3h4v4h2l5 4-9 7z" fill="#777" /></Ico>
        <div className="w-[29px] h-[21px] bg-[#2e2e2e] flex items-center justify-center"><Eye color="#bbb" /></div>
        <Ico size={15} className="ml-[5px] mr-[17px]"><path d="M3 5h14M7 5V2h6v3M4 6l1 12h10l1-12M8 8v8M12 8v8" fill="none" stroke="#777" strokeWidth="1.300" /></Ico>
        <div className="w-[9px] h-[9px] bg-[radial-gradient(#777_1px,transparent_1px)] bg-[length:3px_3px]" />
      </div>
    </div>
  );
}

function Eye({ color = "#999" }: { color?: string }) {
  return (
    <svg width="13" height="9" viewBox="0 0 13 9">
      <path d="M0 4.500Q6.500-2 13 4.500 6.500 11 0 4.500z" fill={color} />
      <circle cx="6.500" cy="4.500" r="2.500" fill="#222" />
      <circle cx="6.500" cy="3.800" r="0.800" fill={color} />
    </svg>
  );
}

function LayerThumb({ variant }: { variant: 3 | 2 | 1 | 0 }) {
  const h = variant === 3 || variant === 0 ? 31 : 30;
  return (
    <div className="relative w-[32px] border border-black shrink-0 bg-[conic-gradient(#ddd_25%,#fff_0_50%,#ddd_0_75%,#fff_0)] bg-[length:8px_8px]" style={{ height: h }}>
      <div className="absolute left-[2px] top-[2px] w-[26px] h-[26px] rounded-full bg-white border-2 border-[#666]" />
      <div className="absolute right-[-1px] bottom-[-1px] w-[14px] h-[14px] bg-[#3a3a3a] border-t border-l border-black flex items-center justify-center">
        <div className="w-[9px] h-[9px] border border-[#aaa]" />
      </div>
    </div>
  );
}

function LayerRow({ children, h = 39, selected }: { children: ReactNode; h?: number; selected?: boolean }) {
  return (
    <div className="flex items-stretch border-b border-[#252525] shrink-0" style={{ height: h }}>
      <div className="w-[30px] flex items-center justify-center border-r border-[#2a2a2a] shrink-0"><Eye /></div>
      <div className={"flex-1 flex items-center min-w-0 " + (selected ? "bg-[#47505f]" : "")}>{children}</div>
    </div>
  );
}

function LayerName({ children }: { children: ReactNode }) {
  return <span className="text-[#cfcfcf] text-[12px] whitespace-nowrap tracking-[0.5px]">{children}</span>;
}

function Num({ children }: { children: ReactNode }) {
  return <span className="text-[#8fb4d8]">{children}</span>;
}

function FootIcon({ children }: { children: ReactNode }) {
  return <div className="w-[14px] flex items-center justify-center shrink-0">{children}</div>;
}

function LayersPanel() {
  return (
    <div className="flex-1 bg-[#383838] flex flex-col min-h-0 border-t border-[#1c1c1c]">
      <div className="h-[17px] bg-[#282828] flex items-stretch border-b border-[#1c1c1c] shrink-0 mt-[1px]">
        <Tab>3D</Tab>
        <Tab active>레이어</Tab>
        <Tab>채널</Tab>
        <div className="ml-auto flex items-center pr-[3px]"><MenuGlyph /></div>
      </div>
      <div className="h-[28px] flex items-center pl-[4px] border-b border-[#2c2c2c] shrink-0">
        <div className="w-[66px] h-[20px] rounded-[3px] bg-[#444] border border-[#1c1c1c] flex items-center justify-between pl-[5px] pr-[3px] text-[#c8c8c8] text-[12px]">
          <span className="flex items-center gap-[4px]">
            <svg width="10" height="10" viewBox="0 0 10 10"><circle cx="6" cy="4" r="3" fill="none" stroke="#ddd" strokeWidth="1.300" /><path d="M4 6L1 9" stroke="#ddd" strokeWidth="1.500" /></svg>
            종류
          </span>
          <UpDown />
        </div>
        <div className="flex items-center gap-[8px] ml-[21px]">
          <Ico size={16}><rect x="2" y="4" width="16" height="12" fill="none" stroke="#aaa" strokeWidth="1.500" /><path d="M4 14l4-3 2 2 3-1 3 2z" fill="#aaa" /></Ico>
          <Ico size={16}><circle cx="10" cy="10" r="7" fill="#aaa" /><path d="M14 5L5 14a7 7 0 0 0 9-9z" fill="#444" /></Ico>
          <span className="w-[16px] text-center text-[#aaa] text-[15px] font-bold leading-none font-['Liberation_Serif',serif]">T</span>
          <Ico size={16}><rect x="3.500" y="3.500" width="13" height="13" fill="none" stroke="#aaa" strokeWidth="1.500" /></Ico>
          <Ico size={16}><path d="M8 2h6l3 3v11H8z" fill="none" stroke="#aaa" strokeWidth="1.400" /><rect x="3" y="9" width="6" height="8" fill="#aaa" /></Ico>
        </div>
        <div className="ml-auto mr-[15px] w-[9px] h-[18px] bg-[#222] border border-[#222]"><div className="h-[8px] bg-[#777]" /></div>
      </div>
      <div className="h-[28px] flex items-center pl-[4px] border-b border-[#2c2c2c] shrink-0">
        <div className="w-[111px] h-[20px] rounded-[3px] bg-[#444] border border-[#1c1c1c] flex items-center justify-between pl-[9px] pr-[3px] text-[#c8c8c8] text-[12px]">표준<UpDown /></div>
        <span className="ml-[8px] w-[50px] text-[#c0c0c0] text-[12px] whitespace-nowrap tracking-[0.5px]">불투명도 :</span>
        <div className="ml-[6px]"><Field value="100%" w={56} h={20} caret /></div>
      </div>
      <div className="h-[28px] flex items-center pl-[7px] border-b border-[#2c2c2c] shrink-0">
        <span className="text-[#c0c0c0] text-[12px] whitespace-nowrap tracking-[0.5px]">잠그기 :</span>
        <div className="flex items-center gap-[4px] ml-[6px]">
          <div className="w-[11px] h-[11px] bg-[conic-gradient(#888_25%,#555_0_50%,#888_0_75%,#555_0)] bg-[length:6px_6px] mr-[4px]" />
          <Ico size={17}><path d="M17 3L8 12l2 1zM8 12q-3 1-5 5h6l1-4z" fill="#666" /></Ico>
          <Ico size={15}><path d="M10 1v18M1 10h18" stroke="#aaa" strokeWidth="1.300" /><path d="M10 1l-3 3h6zM10 19l-3-3h6zM1 10l3-3v6zM19 10l-3-3v6z" fill="#aaa" /></Ico>
          <Ico size={15} className="ml-[4px]"><rect x="4" y="9" width="12" height="9" fill="#aaa" /><path d="M6.500 9V6a3.500 3.500 0 0 1 7 0v3" fill="none" stroke="#aaa" strokeWidth="1.600" /></Ico>
        </div>
        <span className="ml-auto text-[#c0c0c0] text-[12px] whitespace-nowrap">칠 :</span>
        <div className="ml-[5px] mr-[14px]"><Field value="100%" w={56} h={20} caret /></div>
      </div>
      <div className="flex flex-1 min-h-0">
        <div className="flex-1 flex flex-col min-w-0">
          <LayerRow><div className="ml-[4px]"><LayerThumb variant={3} /></div><div className="ml-[11px]"><LayerName>타원 <Num>1</Num> 사본 <Num>3</Num></LayerName></div></LayerRow>
          <LayerRow><div className="ml-[4px]"><LayerThumb variant={2} /></div><div className="ml-[11px]"><LayerName>타원 <Num>1</Num> 사본 <Num>2</Num></LayerName></div></LayerRow>
          <LayerRow><div className="ml-[4px]"><LayerThumb variant={1} /></div><div className="ml-[11px]"><LayerName>타원 <Num>1</Num> 사본</LayerName></div></LayerRow>
          <LayerRow><div className="ml-[4px]"><LayerThumb variant={0} /></div><div className="ml-[11px]"><LayerName>타원 <Num>1</Num></LayerName></div></LayerRow>
          <LayerRow>
            <div className="ml-[4px] w-[15px] h-[15px] border-t-2 border-l-2 border-white bg-[#1a1a1a] flex items-center justify-center shrink-0"><div className="w-[9px] h-[9px] border border-[#888]" /></div>
            <div className="ml-[11px]"><LayerName>모서리가 둥근 직사각형 <Num>1</Num></LayerName></div>
          </LayerRow>
          <LayerRow selected>
            <div className="ml-[1px] w-[20px] h-[20px] border border-dashed border-white flex items-center justify-center shrink-0"><div className="w-[13px] h-[13px] border-t-2 border-l-2 border-[#ffdb7a] bg-[#222]" /></div>
            <div className="ml-[8px]"><LayerName>모서리가 둥근 직사각형 <Num>1 ...</Num></LayerName></div>
          </LayerRow>
          <LayerRow h={27}>
            <div className="ml-[4px] w-[32px] h-[19px] bg-white border border-black shrink-0" />
            <div className="ml-[11px] text-[#cfcfcf] text-[11.500px] italic">배경</div>
            <Ico size={13} className="ml-auto mr-[17px]"><rect x="4" y="9" width="12" height="9" fill="none" stroke="#aaa" strokeWidth="1.600" /><path d="M6.500 9V6a3.500 3.500 0 0 1 7 0v3" fill="none" stroke="#aaa" strokeWidth="1.600" /></Ico>
          </LayerRow>
        </div>
        <div className="w-[15px] bg-[#2b2b2b] shrink-0" />
      </div>
      <div className="h-[21px] border-t border-[#222] flex items-center shrink-0 pl-[47px] gap-[13px]">
        <FootIcon><Ico size={14}><rect x="2" y="7" width="9" height="6" rx="3" fill="none" stroke="#777" strokeWidth="1.500" /><rect x="9" y="7" width="9" height="6" rx="3" fill="none" stroke="#777" strokeWidth="1.500" /></Ico></FootIcon>
        <FootIcon><span className="text-[#aaa] text-[13px] italic font-bold leading-none font-['Liberation_Serif',serif]">fx</span></FootIcon>
        <FootIcon><div className="w-[13px] h-[10px] bg-[#aaa] flex items-center justify-center"><div className="w-[5px] h-[5px] rounded-full bg-[#333]" /></div></FootIcon>
        <FootIcon><Ico size={14}><circle cx="10" cy="10" r="7" fill="#aaa" /><path d="M14 5L5 14a7 7 0 0 0 9-9z" fill="#444" /></Ico></FootIcon>
        <FootIcon><Ico size={14}><path d="M1 5h7l2 2h9v10H1z" fill="#aaa" /></Ico></FootIcon>
        <FootIcon><Ico size={14}><path d="M4 2h13v16H9v-5H4z" fill="#aaa" /></Ico></FootIcon>
        <FootIcon><Ico size={14}><path d="M3 5h14M7 5V2h6v3M4 6l1 12h10l1-12M8 8v8M12 8v8" fill="none" stroke="#aaa" strokeWidth="1.300" /></Ico></FootIcon>
      </div>
    </div>
  );
}

export default function App() {
  return (
    <div className="w-[1899px] h-[905px] bg-[#353535] flex flex-col overflow-hidden font-['Liberation_Sans','Noto_Sans_CJK_KR',sans-serif]">
      <MenuBar />
      <OptionsBar />
      <div className="flex-1 flex min-h-0 px-[4px] pb-[5px]">
        <ToolPanel />
        <div className="flex-1 flex flex-col min-w-0 border-r border-[#1a1a1a]">
          <div className="flex-1 bg-[#0f0f0f] relative border-b border-[#1a1a1a]">
            <DocWindow />
            <CharacterPanel />
          </div>
          <div className="h-[20px] bg-[#262626] flex items-stretch shrink-0 mt-px">
            <div className="w-[61px] bg-[#383838] border-r border-[#1c1c1c] text-[#d0d0d0] text-[12.500px] flex items-center justify-center whitespace-nowrap">타임라인</div>
          </div>
        </div>
        <div className="w-[292px] flex flex-col shrink-0 h-full">
          <div className="h-[12px] bg-[#262626] border-b border-[#1a1a1a] flex items-center justify-between px-[38px] text-[#bbb] text-[8px] leading-none shrink-0">
            <span>◂◂</span><span className="-mr-[36px]">▸▸</span>
          </div>
          <div className="flex-1 flex min-h-0">
            <Dock />
            <div className="flex-1 flex flex-col ml-[2px] min-w-0 border-x border-[#1a1a1a]">
              <PropertiesPanel />
              <LayersPanel />
            </div>
          </div>
        </div>
      </div>
    </div>
  );
}
